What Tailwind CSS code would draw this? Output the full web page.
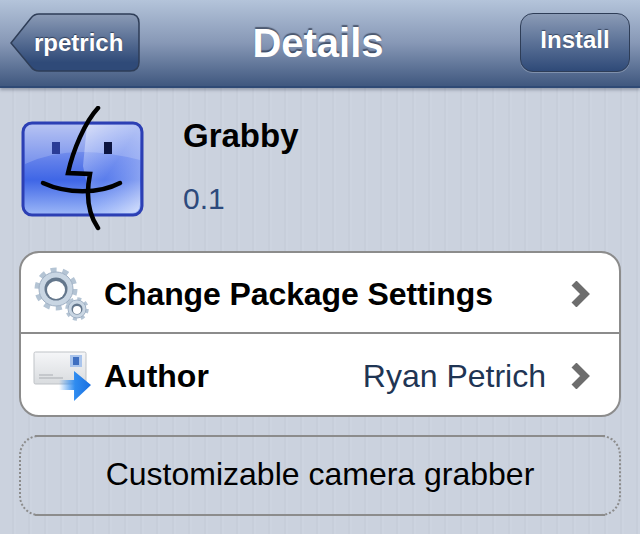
<!DOCTYPE html>
<html lang="en">
<head>
    <meta charset="UTF-8">
    <title>Details</title>
    <script src="https://cdn.jsdelivr.net/npm/@tailwindcss/browser@4"></script>
</head>
<body class="w-[640px] h-[534px] overflow-hidden font-['Liberation_Sans',Arial,sans-serif] bg-[#cbd2de] bg-[repeating-linear-gradient(90deg,#cbd2de_0px,#cbd2de_12px,#c7ceda_12px,#c7ceda_14px,#cdd4e0_14px,#cdd4e0_16px)]">
    <!-- nav bar -->
    <header class="h-[88px] flex items-start justify-between pl-[10px] pr-[10px] pt-[13px] border-b-[2px] border-[#2f4a75] bg-gradient-to-b from-[#b4c4da] via-[#8798b6] to-[#40587f] shadow-[0_2px_3px_rgba(60,70,90,0.4)]">
        <div class="relative w-[130px] h-[59px]">
            <svg class="absolute left-0 top-0" width="130" height="59" viewBox="0 0 130 59">
                <defs>
                    <linearGradient id="backFill" x1="0" y1="0" x2="0" y2="1">
                        <stop offset="0" stop-color="#8b9bb6"/>
                        <stop offset="0.85" stop-color="#2f4a78"/>
                        <stop offset="1" stop-color="#2f4a78"/>
                    </linearGradient>
                </defs>
                <path d="M1 30 L21 5 Q24 1 29 1 L120 1 Q129 1 129 10 L129 49 Q129 58 120 58 L29 58 Q24 58 21 54 Z" fill="url(#backFill)" stroke="#2e3d57" stroke-width="1.5"/>
            </svg>
            <span class="absolute left-[24px] top-[15px] text-[24px] leading-[30px] font-bold text-white [text-shadow:0_-1px_1px_rgba(20,30,50,0.6)]">rpetrich</span>
        </div>
        <h1 class="mt-[8px] ml-[-24px] text-[40px] leading-[44px] font-bold text-white [text-shadow:0_-2px_1px_rgba(30,40,60,0.6)]">Details</h1>
        <button class="w-[110px] h-[59px] rounded-[13px] border-[1.5px] border-[#2e3d57] bg-gradient-to-b from-[#8b9bb6] to-[#2f4a78] text-[24px] leading-[52px] pb-[6px] font-bold text-white [text-shadow:0_-1px_1px_rgba(20,30,50,0.6)] shadow-[0_1px_0_rgba(255,255,255,0.25)]">Install</button>
    </header>

    <!-- package header -->
    <section class="h-[163px] flex pl-[21px]">
        <div class="w-[124px] h-[163px] shrink-0">
            <svg width="124" height="126" viewBox="0 0 124 126" class="mt-[18px]">
                <defs>
                    <linearGradient id="finderFill" x1="0" y1="0" x2="0" y2="1">
                        <stop offset="0" stop-color="#a9b8f0"/>
                        <stop offset="0.42" stop-color="#5f7eea"/>
                        <stop offset="0.62" stop-color="#3f66e6"/>
                        <stop offset="1" stop-color="#9db8f8"/>
                    </linearGradient>
                    <linearGradient id="finderRight" x1="0" y1="0" x2="1" y2="1">
                        <stop offset="0" stop-color="#ffffff" stop-opacity="0.5"/>
                        <stop offset="0.5" stop-color="#a8c0ff" stop-opacity="0.25"/>
                        <stop offset="1" stop-color="#ffffff" stop-opacity="0.6"/>
                    </linearGradient>
                </defs>
                <rect x="2" y="17" width="119" height="92" rx="9" fill="url(#finderFill)" stroke="#2c3fb4" stroke-width="3"/>
                <path d="M66 19 L112 19 Q119 19 119 26 L119 98 Q119 107 110 107 L72 107 L62 60 Z" fill="url(#finderRight)"/>
                <path d="M4 58 Q50 36 119 54 L119 26 Q119 19 112 19 L12 19 Q4 19 4 26 Z" fill="#ffffff" fill-opacity="0.18"/>
                <rect x="31" y="36" width="8" height="12" fill="#2a3c96"/>
                <rect x="83" y="36" width="8" height="12" fill="#0d1540"/>
                <path d="M77 2 C64 16 52 44 47 67 L69 68 C65 88 66 106 77 122" fill="none" stroke="#000" stroke-width="4.5" stroke-linecap="round" stroke-linejoin="miter"/>
                <path d="M22 77 C46 88 78 88 99 77" fill="none" stroke="#000" stroke-width="4.5" stroke-linecap="round"/>
            </svg>
        </div>
        <div class="pl-[38px]">
            <h2 class="mt-[29px] text-[33px] leading-[38px] font-bold text-black">Grabby</h2>
            <p class="mt-[27px] text-[30px] leading-[34px] text-[#2d4a7c]">0.1</p>
        </div>
    </section>

    <!-- rows -->
    <div class="mx-[19px] h-[166px] rounded-[20px] border-[2px] border-[#8c8c8c] bg-white overflow-hidden flex flex-col">
        <div class="h-[81px] flex items-center border-b-[2px] border-[#8c8c8c] pt-[2px]">
            <div class="w-[83px] flex justify-center shrink-0">
                <svg width="62" height="62" viewBox="0 0 62 62">
                    <circle cx="24" cy="26" r="19" fill="none" stroke="#b4c4d4" stroke-width="5" stroke-dasharray="6 5.94"/>
                    <circle cx="24" cy="26" r="17" fill="#c9d6e3" stroke="#9fb0c4" stroke-width="1"/>
                    <circle cx="24" cy="26" r="11.5" fill="#64778c"/>
                    <circle cx="24" cy="27" r="9" fill="#ffffff"/>
                    <circle cx="45" cy="46" r="10" fill="none" stroke="#b4c4d4" stroke-width="3.5" stroke-dasharray="3.9 3.95"/>
                    <circle cx="45" cy="46" r="9" fill="#c9d6e3" stroke="#9fb0c4" stroke-width="1"/>
                    <circle cx="45" cy="46" r="5.5" fill="#64778c"/>
                    <circle cx="45" cy="47" r="4" fill="#ffffff"/>
                </svg>
            </div>
            <span class="text-[32px] leading-[38px] font-bold text-black flex-1 tracking-[-0.1px]">Change Package Settings</span>
            <svg class="mr-[28px]" width="20" height="26" viewBox="0 0 20 26"><path d="M3 2 L14 13 L3 24" fill="none" stroke="#6d6d6d" stroke-width="7"/></svg>
        </div>
        <div class="flex-1 flex items-center pt-[2px]">
            <div class="w-[83px] flex justify-center shrink-0">
                <svg width="60" height="52" viewBox="0 0 60 52">
                    <defs>
                        <linearGradient id="envFill" x1="0" y1="0" x2="0" y2="1">
                            <stop offset="0" stop-color="#f5f6f8"/>
                            <stop offset="1" stop-color="#d9dcdf"/>
                        </linearGradient>
                        <linearGradient id="arrowFill" x1="0" y1="0" x2="1" y2="0">
                            <stop offset="0" stop-color="#2f8cf0" stop-opacity="0"/>
                            <stop offset="0.5" stop-color="#2f8cf0"/>
                            <stop offset="1" stop-color="#1a6fe0"/>
                        </linearGradient>
                    </defs>
                    <rect x="1" y="2" width="52" height="32" rx="1.5" fill="url(#envFill)" stroke="#bfc3c7"/>
                    <rect x="37" y="5" width="12" height="12" fill="#a9c4ec"/>
                    <rect x="40" y="7" width="6" height="8" fill="#3f6fc0"/>
                    <path d="M6 25 H20 M6 28 H30" stroke="#a9adb2" stroke-width="1"/>
                    <path d="M26 30 H41 V21 L58 35 L41 51 V40 H26 Z" fill="url(#arrowFill)"/>
                </svg>
            </div>
            <span class="text-[32px] leading-[38px] font-bold text-black flex-1">Author</span>
            <span class="text-[32px] leading-[38px] text-[#1f3554] mr-[25px]">Ryan Petrich</span>
            <svg class="mr-[28px]" width="20" height="26" viewBox="0 0 20 26"><path d="M3 2 L14 13 L3 24" fill="none" stroke="#6d6d6d" stroke-width="7"/></svg>
        </div>
    </div>

    <!-- description -->
    <div class="relative mx-[19px] mt-[18px] h-[81px] pb-[3px] rounded-[20px] border-[2px] border-dotted border-[#8c8c8c] flex items-center justify-center">
        <div class="absolute top-[-2px] left-[14px] right-[14px] h-[2px] bg-[#8c8c8c]"></div>
        <div class="absolute bottom-[-2px] left-[14px] right-[14px] h-[2px] bg-[#8c8c8c]"></div>
        <span class="text-[32px] leading-[36px] text-black">Customizable camera grabber</span>
    </div>
</body>
</html>
